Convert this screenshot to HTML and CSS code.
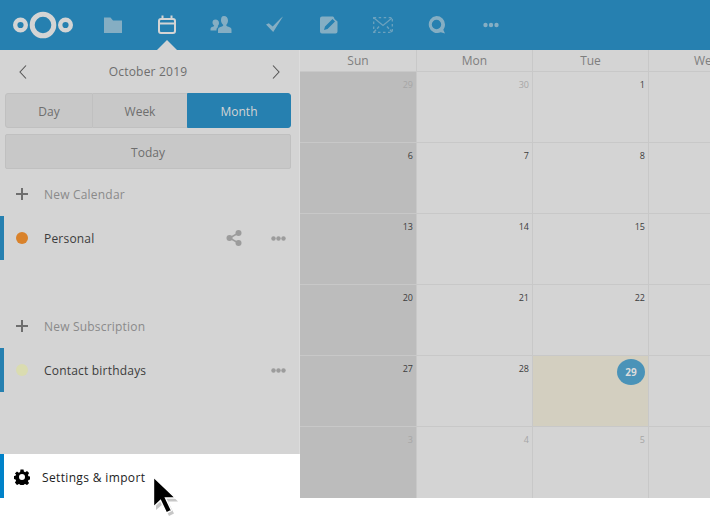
FILE: index.html
```html
<!DOCTYPE html>
<html lang="en">
<head>
  <meta charset="UTF-8"/>
  <title>Calendar</title>
  <link rel="stylesheet" href="styles.css">
</head>
<body>
  <header class="topbar">
    <div class="logo">
      <svg width="60" height="28" viewBox="0 0 60 28"><g fill="none" stroke="#d4d4d4"><circle cx="30" cy="14" r="10.800" stroke-width="5"/><circle cx="7.500" cy="14" r="5.300" stroke-width="4.400"/><circle cx="52.500" cy="14" r="5.300" stroke-width="4.400"/></g></svg>
    </div>
    <nav class="apps">
      <a class="app dim"><svg width="20" height="20" viewBox="0 0 20 20"><path fill="#d4d4d4" d="M1 2.500h6.500l2.500 3h9v12.500H1z"/></svg></a>
      <a class="app active"><svg width="20" height="20" viewBox="0 0 20 20"><g fill="none" stroke="#d4d4d4" stroke-width="2"><rect x="2" y="4" width="16" height="14" rx="2"/><path d="M2 8.500h16"/></g><path fill="#d4d4d4" d="M4.500 .5h2v4h-2zM13.500 .5h2v4h-2z"/></svg></a>
      <a class="app dim"><svg width="22" height="20" viewBox="0 0 22 20"><path fill="#d4d4d4" d="M14 1c2.500 0 4 2 4 4.500 0 2-1 3.500-1.800 4.500 0 1 .8 1.200 2.300 1.800 1.600.6 3 1.200 3 3V18H8v-3.200c0-1.800 1.400-2.400 3-3 1.500-.6 2.300-.8 2.300-1.800C12.500 9 11 7.500 11 5.500 11 3 11.500 1 14 1zM5.500 4.500C7.500 4.500 9 6 9 8c0 1.300-.6 2.300-1.300 3.100 0 .5.200.7.600.9-1.800.7-1.800 2.300-1.800 3.500H.5V14c0-1.300 1-1.700 2.200-2.200 1-.4 1.500-.5 1.500-1.100C3.500 10 2.500 9 2.500 7.500c0-1.800 1-3 3-3z"/></svg></a>
      <a class="app dim"><svg width="20" height="20" viewBox="0 0 20 20"><path fill="#d4d4d4" d="M18 1.500L8.200 17 1 9.500l2.800-1.300 3.900 3.300L16 3z"/></svg></a>
      <a class="app dim"><svg width="20" height="20" viewBox="0 0 20 20"><path fill="#d4d4d4" fill-rule="evenodd" d="M3 1.500h11l1 1 .5 1.500 3 2.500v10a2 2 0 0 1-2 2H3a2 2 0 0 1-2-2v-13a2 2 0 0 1 2-2zM13.500 4L6 11.500 5 15l3.500-1L16 6.500z"/></svg></a>
      <a class="app dimmer"><svg width="20" height="16" viewBox="0 0 20 16"><g fill="none" stroke="#d4d4d4" stroke-width="1.300"><rect x=".7" y=".7" width="18.600" height="14.600" stroke-dasharray="2.500 2.500"/><path d="M1 1l9 7.500L19 1"/><path stroke-dasharray="3 1.500" d="M1 15l6-6.500M19 15l-6-6.500"/></g></svg></a>
      <a class="app dim"><svg width="20" height="20" viewBox="0 0 20 20"><path fill="#d4d4d4" fill-rule="evenodd" d="M9.500 1a8.500 8.500 0 0 1 8.500 8.500c0 2-.6 3.800-1.700 5.200l1.700 3.800-4.200-1.300a8.500 8.500 0 1 1-4.300-16.200zm0 3.800a4.700 4.700 0 1 0 0 9.400 4.700 4.700 0 0 0 0-9.400z"/></svg></a>
      <a class="app dim"><svg width="16" height="6" viewBox="0 0 16 6"><g fill="#d4d4d4"><circle cx="2.500" cy="3" r="2.200"/><circle cx="8" cy="3" r="2.200"/><circle cx="13.500" cy="3" r="2.200"/></g></svg></a>
    </nav>
  </header>

  <main class="content">
    <aside class="sidebar">
      <div class="month-nav">
        <svg width="10" height="16" viewBox="0 0 10 16"><path fill="none" stroke="#555" stroke-width="1.100" d="M8 1.500L2 8l6 6.500"/></svg>
        <span class="month-label">October 2019</span>
        <svg width="10" height="16" viewBox="0 0 10 16"><path fill="none" stroke="#555" stroke-width="1.100" d="M2 1.500L8 8l-6 6.500"/></svg>
      </div>
      <div class="views">
        <button class="view view-day">Day</button>
        <button class="view view-week">Week</button>
        <button class="view view-month">Month</button>
      </div>
      <button class="today">Today</button>

      <div class="row row-new">
        <span class="row-icon"><svg width="14" height="14" viewBox="0 0 14 14"><path fill="#6e6e6e" d="M6 1h2v5h5v2H8v5H6V8H1V6h5z"/></svg></span>
        <span>New Calendar</span>
      </div>
      <div class="row row-cal">
        <span class="row-icon"><i class="dot dot-orange"></i></span>
        <span class="row-name">Personal</span>
        <span class="row-action"><svg width="16" height="16" viewBox="0 0 16 16"><g fill="#9c9c9c"><circle cx="3.500" cy="8" r="3"/><circle cx="12.500" cy="3" r="3"/><circle cx="12.500" cy="13" r="3"/></g><path fill="none" stroke="#9c9c9c" stroke-width="1.500" d="M12.500 3l-9 5 9 5"/></svg></span>
        <span class="row-action"><svg width="15" height="5" viewBox="0 0 15 5"><g fill="#9c9c9c"><circle cx="2.500" cy="2.500" r="2.200"/><circle cx="7.500" cy="2.500" r="2.200"/><circle cx="12.500" cy="2.500" r="2.200"/></g></svg></span>
      </div>
      <div class="row-spacer"></div>
      <div class="row row-new">
        <span class="row-icon"><svg width="14" height="14" viewBox="0 0 14 14"><path fill="#6e6e6e" d="M6 1h2v5h5v2H8v5H6V8H1V6h5z"/></svg></span>
        <span>New Subscription</span>
      </div>
      <div class="row row-cal">
        <span class="row-icon"><i class="dot dot-yellow"></i></span>
        <span class="row-name">Contact birthdays</span>
        <span class="row-action"><svg width="15" height="5" viewBox="0 0 15 5"><g fill="#9c9c9c"><circle cx="2.500" cy="2.500" r="2.200"/><circle cx="7.500" cy="2.500" r="2.200"/><circle cx="12.500" cy="2.500" r="2.200"/></g></svg></span>
      </div>
      <div class="settings">
        <svg width="16" height="16" viewBox="0 0 16 16"><path fill-rule="evenodd" d="M6.500.5h3l.4 2.100 1.300.6 1.800-1.200 2.100 2.100-1.200 1.800.6 1.300 2 .3v3l-2 .4-.6 1.300 1.200 1.800-2.100 2.100-1.800-1.200-1.300.6-.4 1.900h-3l-.4-2-1.300-.5-1.800 1.200L.9 13.500l1.200-1.800-.6-1.300-1.900-.4v-3l1.900-.3.600-1.300L.9 4.600 3 2.500l1.800 1.200 1.300-.6zM8 5a3 3 0 1 0 0 6 3 3 0 0 0 0-6z"/></svg>
        <span class="settings-label">Settings &amp; import</span>
      </div>
    </aside>

    <section class="calendar">
      <div class="head">Sun</div><div class="head">Mon</div><div class="head">Tue</div><div class="head">Wed</div>
      <div class="head"></div><div class="head"></div><div class="head"></div>

      <div class="cell sun other">29</div><div class="cell other">30</div><div class="cell">1</div><div class="cell"></div><div class="cell"></div><div class="cell"></div><div class="cell"></div>
      <div class="cell sun">6</div><div class="cell">7</div><div class="cell">8</div><div class="cell"></div><div class="cell"></div><div class="cell"></div><div class="cell"></div>
      <div class="cell sun">13</div><div class="cell">14</div><div class="cell">15</div><div class="cell"></div><div class="cell"></div><div class="cell"></div><div class="cell"></div>
      <div class="cell sun">20</div><div class="cell">21</div><div class="cell">22</div><div class="cell"></div><div class="cell"></div><div class="cell"></div><div class="cell"></div>
      <div class="cell sun">27</div><div class="cell">28</div><div class="cell now"><span class="badge">29</span></div><div class="cell"></div><div class="cell"></div><div class="cell"></div><div class="cell"></div>
      <div class="cell sun other last">3</div><div class="cell other last">4</div><div class="cell other last">5</div><div class="cell last"></div><div class="cell last"></div><div class="cell last"></div><div class="cell last"></div>
    </section>
  </main>

  <svg class="cursor" width="30" height="42" viewBox="0 0 30 42">
    <path fill="#000" opacity=".22" d="M5 5v30l7-6 6 12 5-2.500-6-12h10z"/>
    <path fill="#000" stroke="#fff" stroke-width="1.400" d="M2.500 2v30l7-6.500 6 12.500 5-2.500-6-12.500h10z"/>
  </svg>
</body>
</html>
```

FILE: styles.css
```css
:root {
  --blue: #2680b0;
  --panel: #d4d4d4;
  --line: #c8c8c8;
  --button: #c8c8c8;
  --text: #6e6e6e;
  --text-dark: #3c3c3c;
}

* {
  box-sizing: border-box;
  margin: 0;
  padding: 0;
}

html, body {
  height: 516px;
  overflow: hidden;
}

body {
  font-family: "Open Sans", sans-serif;
  font-size: 12px;
  color: var(--text);
  background-color: #fff;
  position: relative;
}

.topbar {
  height: 50px;
  background-color: var(--blue);
  display: flex;
  align-items: center;
}

.logo {
  width: 86px;
  padding-left: 13px;
  display: flex;
}

.apps {
  display: flex;
  height: 50px;
}

.app {
  width: 54px;
  display: flex;
  align-items: center;
  justify-content: center;
  position: relative;
}

.app.dim svg {
  opacity: 0.55;
}

.app.dimmer svg {
  opacity: 0.4;
}

.app.active::after {
  content: "";
  position: absolute;
  left: 50%;
  bottom: 0;
  margin-left: -10px;
  border: 10px solid transparent;
  border-top: 0;
  border-bottom-color: var(--panel);
}

.content {
  display: flex;
  height: 448px;
}

.sidebar {
  width: 300px;
  flex: none;
  background-color: var(--panel);
  border-right: 1px solid #dcdcdc;
  display: flex;
  flex-direction: column;
}

.month-nav {
  height: 43px;
  padding: 0 18px;
  display: flex;
  align-items: center;
  justify-content: space-between;
  font-size: 12px;
}

.month-label {
  letter-spacing: 0.2px;
  margin-right: 3px;
}

.views {
  display: flex;
  margin: 0 8px 0 5px;
  height: 35px;
}

.view, .today {
  font-family: inherit;
  font-size: 12px;
  color: var(--text);
  background-color: var(--button);
  border: 1px solid #c0c0c0;
  padding-top: 2px;
}

.view-day {
  width: 88px;
  border-radius: 3px 0 0 3px;
}

.view-week {
  width: 94px;
  border-left: 0;
  border-right: 0;
}

.view-month {
  width: 104px;
  background-color: var(--blue);
  border-color: var(--blue);
  color: #d4d4d4;
  border-radius: 0 3px 3px 0;
}

.today {
  margin: 6px 8px 3px 5px;
  height: 35px;
  border-radius: 2px;
}

.row {
  height: 44px;
  display: flex;
  align-items: center;
  flex: none;
  letter-spacing: 0.2px;
}

.row-icon {
  width: 44px;
  display: flex;
  justify-content: center;
  flex: none;
}

.row-new {
  color: #8a8a8a;
}

.row-cal {
  border-left: 4px solid var(--blue);
  color: var(--text-dark);
  margin-right: -1px;
}

.row-cal .row-icon {
  width: 40px;
  padding-right: 4px;
}

.row-name {
  flex: 1;
}

.row-spacer {
  height: 44px;
}

.row-action {
  width: 44px;
  display: flex;
  justify-content: center;
  align-items: center;
}

.dot {
  display: block;
  width: 12px;
  height: 12px;
  border-radius: 50%;
}

.dot-orange {
  background-color: #d9822b;
}

.dot-yellow {
  background-color: #dadcb0;
}

.settings {
  margin-top: auto;
  height: 44px;
  background-color: #fff;
  border-left: 4px solid #0082c9;
  margin-right: -1px;
  padding: 1px 0 0 10px;
  display: flex;
  align-items: center;
  gap: 12px;
  color: #222;
  letter-spacing: 0.35px;
}

.settings-label {
  padding-top: 2px;
}

.calendar {
  flex: 1;
  overflow: hidden;
  display: grid;
  grid-template-columns: 117px repeat(6, 116px);
  grid-template-rows: 22px repeat(5, 71px) 71px;
  background-color: var(--panel);
}

.head {
  text-align: center;
  line-height: 21px;
  color: #7e7e7e;
  border-right: 1px solid var(--line);
  border-bottom: 1px solid var(--line);
}

.cell {
  font-size: 9px;
  color: #3c3c3c;
  text-align: right;
  padding: 6px 3px 0 0;
  border-right: 1px solid var(--line);
  border-bottom: 1px solid var(--line);
}

.cell.last {
  border-bottom: 0;
}

.cell.sun {
  background-color: #bcbcbc;
}

.cell.other {
  color: #a6a6a6;
}

.cell.now {
  background-color: #d3cfc0;
  padding: 3px 3px 0 0;
}

.badge {
  display: inline-block;
  width: 28px;
  height: 26px;
  line-height: 26px;
  border-radius: 50%;
  text-align: center;
  font-size: 10px;
  font-weight: 700;
  color: #dcdcdc;
  background-color: #4a93b8;
}

.cursor {
  position: absolute;
  left: 151px;
  top: 475px;
}
```
